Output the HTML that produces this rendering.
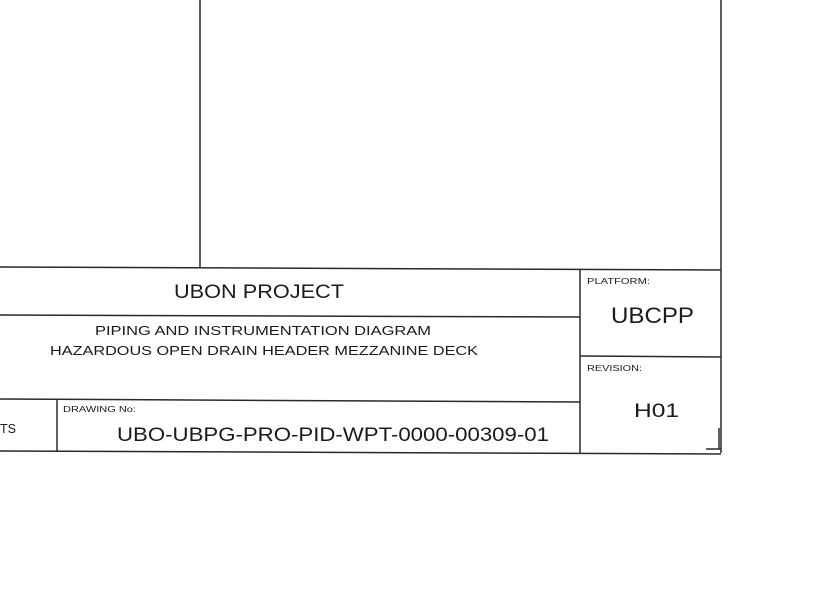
<!DOCTYPE html><html><head><style>body{margin:0;background:#fff;width:827px;height:585px;overflow:hidden}</style></head><body>
<svg width="827" height="585" xmlns="http://www.w3.org/2000/svg" font-family="Liberation Sans, sans-serif" fill="#1a1a1a">
<g stroke="#2a2a2a" stroke-width="1.5" fill="none">
<line x1="200" y1="0" x2="200" y2="268"/>
<line x1="721" y1="0" x2="721" y2="453"/>
<line x1="0" y1="267" x2="721" y2="270"/>
<line x1="0" y1="315" x2="580" y2="317"/>
<line x1="0" y1="399" x2="580" y2="402"/>
<line x1="0" y1="451" x2="721" y2="454"/>
<line x1="580" y1="269" x2="580" y2="453"/>
<line x1="580" y1="356" x2="721" y2="357"/>
<line x1="57" y1="400" x2="57" y2="452"/>
<line x1="706" y1="449" x2="721" y2="449"/>
<line x1="719" y1="428" x2="719" y2="449"/>
</g>
<text x="174" y="298" font-size="19" textLength="170" lengthAdjust="spacingAndGlyphs">UBON PROJECT</text>
<text x="95" y="335" font-size="12.5" textLength="336" lengthAdjust="spacingAndGlyphs">PIPING AND INSTRUMENTATION DIAGRAM</text>
<text x="50" y="355" font-size="12.5" textLength="428" lengthAdjust="spacingAndGlyphs">HAZARDOUS OPEN DRAIN HEADER MEZZANINE DECK</text>
<text x="0" y="433" font-size="12.5">TS</text>
<text x="63" y="412" font-size="8" textLength="73" lengthAdjust="spacingAndGlyphs">DRAWING No:</text>
<text x="117" y="441" font-size="19" textLength="432" lengthAdjust="spacingAndGlyphs">UBO-UBPG-PRO-PID-WPT-0000-00309-01</text>
<text x="587" y="284" font-size="8.5" textLength="63" lengthAdjust="spacingAndGlyphs">PLATFORM:</text>
<text x="611" y="323" font-size="22" textLength="83" lengthAdjust="spacingAndGlyphs">UBCPP</text>
<text x="587" y="371" font-size="8.5" textLength="55" lengthAdjust="spacingAndGlyphs">REVISION:</text>
<text x="634" y="417" font-size="19" textLength="45" lengthAdjust="spacingAndGlyphs">H01</text>
</svg></body></html>
